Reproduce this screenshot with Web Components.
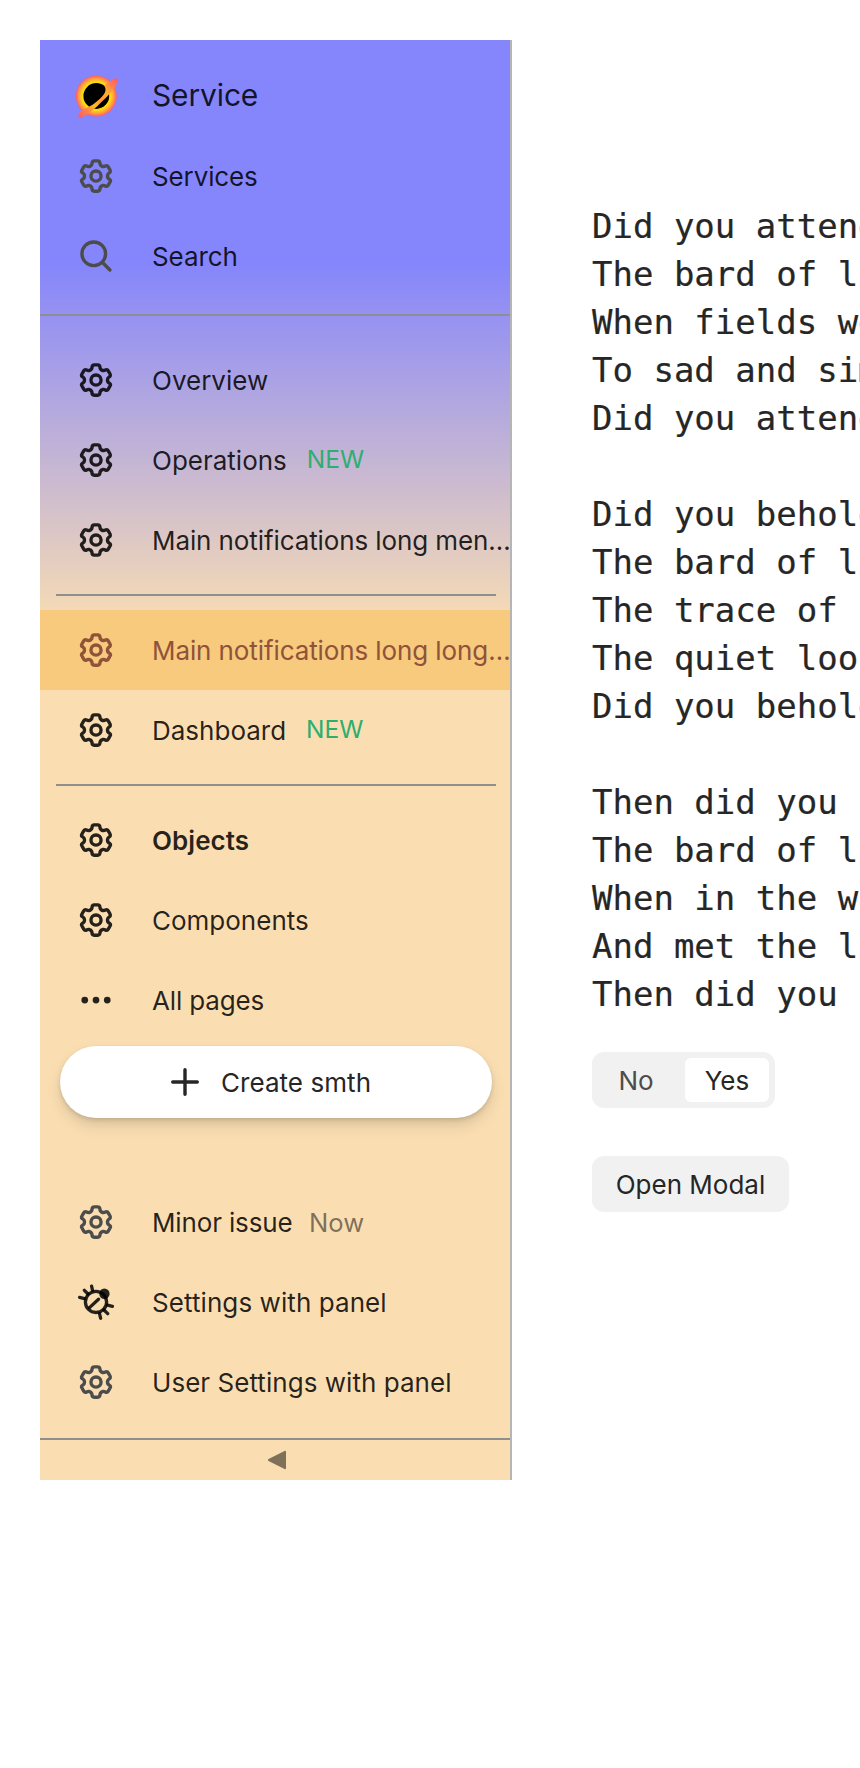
<!DOCTYPE html>
<html lang="en">
<head>
<meta charset="utf-8">
<title>Aside navigation</title>
<style>
html, body { margin: 0; background: #fff; }
body { width: 860px; height: 1768px; overflow: hidden; font-family: Inter, "Liberation Sans", sans-serif; font-size: 26px; line-height: 36px; color: #262626; }
</style>
</head>
<body>
<nav-shell></nav-shell>
<script>
const GEAR = '<svg viewBox="0 0 16 16"><path fill="currentColor" fill-rule="evenodd" d="M7.199 2H8.8a.2.2 0 0 1 .2.2C9 4.008 10.958 5.139 12.524 4.234a.199.199 0 0 1 .271.073l.802 1.388a.199.199 0 0 1-.073.272C11.958 6.871 11.958 9.129 13.524 10.033a.199.199 0 0 1 .073.272l-.802 1.388a.199.199 0 0 1-.271.073C10.958 10.862 9 11.992 9 13.8a.2.2 0 0 1-.2.2H7.2a.2.2 0 0 1-.2-.2C7 11.992 5.042 10.862 3.476 11.766a.199.199 0 0 1-.271-.073l-.802-1.388a.199.199 0 0 1 .073-.272C4.042 9.129 4.042 6.871 2.476 5.967a.199.199 0 0 1-.073-.272l.802-1.388a.199.199 0 0 1 .271-.073C5.042 5.139 7 4.008 7 2.2a.2.2 0 0 1 .199-.2ZM5.5 2.2C5.5 1.261 6.261.5 7.2.5H8.8c.939 0 1.7.761 1.7 1.7 0 .653.707 1.061 1.273.735a1.699 1.699 0 0 1 2.32.622l.802 1.388c.469.813.19 1.852-.622 2.32-.566.327-.566 1.144 0 1.47a1.7 1.7 0 0 1 .622 2.32l-.802 1.388a1.7 1.7 0 0 1-2.32.622.849.849 0 0 0-1.273.735c0 .939-.761 1.7-1.7 1.7H7.2a1.7 1.7 0 0 1-1.7-1.7.849.849 0 0 0-1.273-.735 1.7 1.7 0 0 1-2.32-.622l-.802-1.388a1.7 1.7 0 0 1 .622-2.32.849.849 0 0 0 0-1.47 1.7 1.7 0 0 1-.622-2.32l.802-1.388a1.7 1.7 0 0 1 2.32-.622A.849.849 0 0 0 5.5 2.2Zm4 5.8a1.5 1.5 0 1 1-3 0 1.5 1.5 0 0 1 3 0ZM11 8a3 3 0 1 1-6 0 3 3 0 0 1 6 0Z"/></svg>';
const ICONS = {
  gear: GEAR,
  search: '<svg viewBox="0 0 16 16" fill="none" stroke="currentColor" stroke-width="1.5" stroke-linecap="round"><circle cx="7" cy="7" r="5.25"/><path d="M10.9 10.9 14.2 14.2"/></svg>',
  dots: '<svg viewBox="0 0 16 16" fill="currentColor"><circle cx="3" cy="8" r="1.5"/><circle cx="8" cy="8" r="1.5"/><circle cx="13" cy="8" r="1.5"/></svg>',
  plus: '<svg viewBox="0 0 36 36" fill="none" stroke="currentColor" stroke-width="3.4" stroke-linecap="round"><path d="M18 5.7V30.3M5.7 18H30.3"/></svg>',
  bug: '<svg viewBox="0 0 36 36" fill="none" stroke="currentColor" stroke-width="3.3" stroke-linecap="round"><circle cx="18" cy="17.9" r="10.6"/><path d="M11.5 23.6 20.5 15.2M13.6 2.1 14.5 6.3M6.4 6.3 10 10M1.6 13.4 6.4 14.6M29.6 21.2 34.4 22.4M26 26 29.7 29.7M21.5 29.6 22.6 34.2"/><circle cx="26.4" cy="9.8" r="5.2" fill="currentColor" stroke="none"/></svg>',
  logo: '<svg viewBox="0 0 44 44"><defs><radialGradient id="g" gradientUnits="userSpaceOnUse" cx="22.3" cy="22" r="20.5"><stop offset=".62" stop-color="#ffe500"/><stop offset=".72" stop-color="#ffd21a"/><stop offset=".85" stop-color="#ff9f3c"/><stop offset="1" stop-color="#ff5a6c"/></radialGradient><linearGradient id="b" gradientUnits="userSpaceOnUse" x1="5" y1="43" x2="43" y2="5"><stop offset="0" stop-color="#ff5a62"/><stop offset=".2" stop-color="#ff8748"/><stop offset=".36" stop-color="#ffc01e"/><stop offset=".5" stop-color="#ff9a3a"/><stop offset=".7" stop-color="#ffb02c"/><stop offset=".82" stop-color="#ff8748"/><stop offset="1" stop-color="#ff5a62"/></linearGradient></defs><circle cx="22.3" cy="22" r="20.5" fill="url(#g)"/><circle cx="22.3" cy="22" r="12.9" fill="#000"/><path fill="url(#b)" d="M40.3 4.8C42.6 3.2 44.6 4.8 43.6 8 41.4 13.2 36.9 18.9 31.2 24.4 24.1 31.3 16.5 39.2 7.5 43.5 4.6 44.4 3.6 42.5 4.9 40.1 6 37.6 7.2 36.6 8.6 35.2 11.5 34.2 14.4 33.2 17.6 31.2 20.4 29.6 23.2 27.2 25.9 24.7 29.2 21.4 31.7 18.8 31.5 15.6 31.4 13.6 30.9 12.6 30.2 11.4 33.4 9.6 37 6.8 40.3 4.8Z"/></svg>',
  back: '<svg viewBox="0 0 20 20"><path d="M2 10 18 1.8V18.2Z" fill="currentColor" stroke="currentColor" stroke-width="2" stroke-linejoin="round"/></svg>'
};
function component(name, css, html) {
  customElements.define(name, class extends HTMLElement {
    constructor() {
      super();
      const t = document.createElement('template');
      t.innerHTML = '<style>' + css + '</style>' + html;
      this.attachShadow({ mode: 'open' }).append(t.content.cloneNode(true));
    }
  });
}
customElements.define('ui-icon', class extends HTMLElement {
  constructor() { super(); this.attachShadow({ mode: 'open' }); }
  connectedCallback() {
    this.shadowRoot.innerHTML = '<style>:host{display:block;flex:none;width:36px;height:36px}svg{display:block;width:100%;height:100%}</style>' + ICONS[this.getAttribute('name')];
  }
});
customElements.define('nav-item', class extends HTMLElement {
  constructor() { super(); this.attachShadow({ mode: 'open' }); }
  connectedCallback() {
    this.shadowRoot.innerHTML = `<style>
      :host{display:flex;align-items:center;height:80px;color:rgba(0,0,0,.85);white-space:nowrap}
      .icon{width:112px;flex:none;display:flex;justify-content:center}
      :host([muted]) .icon{color:#4c4c4c}
      :host([active]){background:#f7ca7d;color:#91523a}
      :host([bold]){font-weight:600}
      :host([brand]){font-size:30px}
      :host([brand]) ui-icon{width:44px;height:44px}
      .text{padding-top:1px;letter-spacing:var(--track,0)}
      :host([brand]) .text{padding:0 0 3px}
    </style><span class="icon"><ui-icon name="${this.getAttribute('icon') || 'gear'}"></ui-icon></span><span class="text"><slot></slot></span><slot name="tag"></slot>`;
  }
});
component('nav-tag', ':host{display:block;margin-left:20px;padding-bottom:2px;font-size:24.5px;color:#2dae70}:host([time]){margin-left:16.5px;padding:1px 0 0;color:rgba(0,0,0,.5);font-size:25.6px}', '<slot></slot>');
component('nav-line', ':host{display:block;height:2px;background:#8f8f8f}:host([inset]){margin:14px 14px 14px 16px}', '');
component('create-button', ':host{display:flex;align-items:center;justify-content:center;gap:18px;height:72px;margin:6px 18px 0 20px;border-radius:36px;background:#fff;color:#262626;box-shadow:0 8px 16px -2px rgba(0,0,0,.15),0 2px 4px rgba(0,0,0,.12);padding-right:14px;box-sizing:border-box}span{padding-top:2px;letter-spacing:.06px}', '<ui-icon name="plus"></ui-icon><span><slot></slot></span>');
component('side-nav', `
  :host{display:flex;flex-direction:column;box-sizing:border-box;width:472px;height:1440px;border-right:2px solid #b5b5b5;flex:none;
    background:linear-gradient(#8585fc 222px,#fadeb2 590px)}
  header{padding:16px 0 18px}
  .menu{padding-top:24px;flex:1}
  footer{padding-bottom:16px}
  .collapse{height:40px;display:flex;align-items:center;justify-content:center;color:#7e7059}
  .collapse ui-icon{width:20px;height:20px;margin-left:3px}
`, `
  <header>
    <nav-item brand icon="logo" style="--track:-.15px">Service</nav-item>
    <nav-item muted style="--track:-.12px">Services</nav-item>
    <nav-item muted icon="search" style="--track:-.1px">Search</nav-item>
  </header>
  <nav-line></nav-line>
  <div class="menu">
    <nav-item>Overview</nav-item>
    <nav-item>Operations<nav-tag slot="tag">NEW</nav-tag></nav-item>
    <nav-item style="--track:-.1px">Main notifications long men…</nav-item>
    <nav-line inset></nav-line>
    <nav-item active style="--track:-.1px">Main notifications long long…</nav-item>
    <nav-item>Dashboard<nav-tag slot="tag">NEW</nav-tag></nav-item>
    <nav-line inset></nav-line>
    <nav-item bold style="--track:.05px">Objects</nav-item>
    <nav-item>Components</nav-item>
    <nav-item icon="dots" style="--track:-.15px">All pages</nav-item>
    <create-button>Create smth</create-button>
  </div>
  <footer>
    <nav-item muted style="--track:-.15px">Minor issue<nav-tag slot="tag" time>Now</nav-tag></nav-item>
    <nav-item icon="bug" style="--track:.08px">Settings with panel</nav-item>
    <nav-item muted style="--track:.04px">User Settings with panel</nav-item>
  </footer>
  <nav-line></nav-line>
  <div class="collapse"><ui-icon name="back"></ui-icon></div>
`);
component('poem-text', ':host{display:block;white-space:pre;font:34px/48px "DejaVu Sans Mono","Liberation Mono",monospace;color:#262626;-webkit-text-stroke:.2px #262626}', '<slot></slot>');
component('toggle-group', `:host{display:flex;box-sizing:border-box;width:183px;height:56px;padding:6px;border-radius:12px;background:#f1f1f1}
  span{display:flex;align-items:center;justify-content:center;height:44px;box-sizing:border-box;padding-top:2px}
  .off{width:76px;margin-right:11px;color:#4c4c4c}.on{width:84px;border-radius:6px;background:#fff}`,
  '<span class="off"><slot name="off"></slot></span><span class="on"><slot name="on"></slot></span>');
component('ui-button', ':host{display:flex;align-items:center;justify-content:center;box-sizing:border-box;padding-top:2px;width:197px;height:56px;border-radius:12px;background:#f1f1f1;color:#262626}', '<slot></slot>');
component('nav-shell', `
  :host{display:flex;padding:40px 0 0 40px;height:1728px;overflow:hidden}
  main{flex:1;min-width:0;padding:162px 0 0 80px}
  toggle-group{margin-top:34px}
  ui-button{margin-top:48px}
`, `
  <side-nav></side-nav>
  <main>
    <poem-text>Did you attend
The bard of l
When fields we
To sad and sim
Did you attend

Did you behold
The bard of l
The trace of
The quiet loo
Did you behold

Then did you
The bard of l
When in the w
And met the l
Then did you</poem-text>
    <toggle-group><span slot="off">No</span><span slot="on">Yes</span></toggle-group>
    <ui-button>Open Modal</ui-button>
  </main>
`);
</script>
</body>
</html>
